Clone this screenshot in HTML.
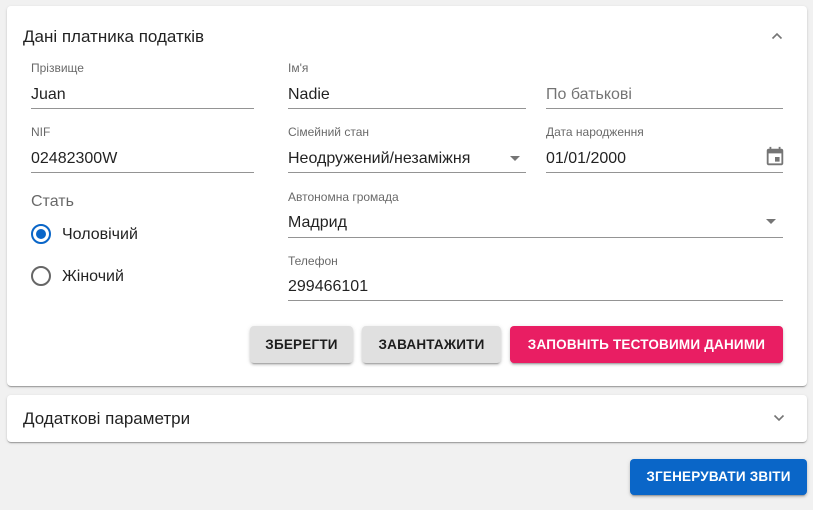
<!DOCTYPE html>
<html><head><meta charset="utf-8"><style>
*{margin:0;padding:0;box-sizing:border-box}
body{width:813px;height:510px;background:#f1f1f1;font-family:"Liberation Sans",Arial,sans-serif;position:relative;overflow:hidden;color:rgba(0,0,0,.87)}
.card{position:absolute;left:7px;width:800px;background:#fff;border-radius:4px;box-shadow:0 2px 1px -1px rgba(0,0,0,.2),0 1px 1px rgba(0,0,0,.14),0 1px 3px rgba(0,0,0,.12)}
.a{position:absolute;white-space:nowrap}
.lbl{font-size:12px;color:rgba(0,0,0,.6)}
.val{font-size:16px}
.ul{position:absolute;height:1px;background:rgba(0,0,0,.42)}
.btn{position:absolute;border-radius:4px;font-size:13.5px;font-weight:bold;text-align:center;line-height:37px;letter-spacing:.2px;box-shadow:0 3px 1px -2px rgba(0,0,0,.2),0 2px 2px rgba(0,0,0,.14),0 1px 5px rgba(0,0,0,.12)}
.tri{position:absolute;width:0;height:0;border-left:5px solid transparent;border-right:5px solid transparent;border-top:5px solid rgba(0,0,0,.54)}
</style></head><body>
<div class="card" style="top:6px;height:380px"></div>
<div class="card" style="top:395px;height:47px"></div>

<div class="a" style="left:23px;top:27px;font-size:17px">Дані платника податків</div>
<svg class="a" style="left:770px;top:31px" width="14" height="10"><path d="M2.5 7.5 L7 3 L11.5 7.5" stroke="rgba(0,0,0,.54)" stroke-width="1.6" fill="none"/></svg>

<div class="a lbl" style="left:31px;top:61px">Прізвище</div>
<div class="a val" style="left:31px;top:86px">Juan</div>
<div class="ul" style="left:31px;top:108px;width:223px"></div>
<div class="a lbl" style="left:288px;top:61px">Ім'я</div>
<div class="a val" style="left:288px;top:86px">Nadie</div>
<div class="ul" style="left:288px;top:108px;width:238px"></div>
<div class="a val" style="left:546px;top:86px;color:rgba(0,0,0,.55)">По батькові</div>
<div class="ul" style="left:546px;top:108px;width:237px"></div>

<div class="a lbl" style="left:31px;top:125px">NIF</div>
<div class="a val" style="left:31px;top:150px">02482300W</div>
<div class="ul" style="left:31px;top:172px;width:223px"></div>
<div class="a lbl" style="left:288px;top:125px">Сімейний стан</div>
<div class="a val" style="left:288px;top:150px">Неодружений/незаміжня</div>
<div class="tri" style="left:510px;top:156px"></div>
<div class="ul" style="left:288px;top:172px;width:238px"></div>
<div class="a lbl" style="left:546px;top:125px">Дата народження</div>
<div class="a val" style="left:546px;top:150px">01/01/2000</div>
<svg class="a" style="left:764px;top:146px" width="22" height="22" viewBox="0 0 24 24"><path fill="rgba(0,0,0,.54)" d="M17 12h-5v5h5v-5zM16 1v2H8V1H6v2H5c-1.1 0-2 .9-2 2v14c0 1.1.9 2 2 2h14c1.1 0 2-.9 2-2V5c0-1.1-.9-2-2-2h-1V1h-2zm3 18H5V8h14v11z"/></svg>
<div class="ul" style="left:546px;top:172px;width:237px"></div>

<div class="a" style="left:31px;top:193px;font-size:16px;color:rgba(0,0,0,.6)">Стать</div>
<div class="a" style="left:31px;top:224px;width:20px;height:20px;border:2px solid #0a66c8;border-radius:50%"><div style="position:absolute;left:3px;top:3px;width:10px;height:10px;border-radius:50%;background:#0a66c8"></div></div>
<div class="a val" style="left:62px;top:226px">Чоловічий</div>
<div class="a" style="left:31px;top:266px;width:20px;height:20px;border:2px solid rgba(0,0,0,.6);border-radius:50%"></div>
<div class="a val" style="left:62px;top:268px">Жіночий</div>

<div class="a lbl" style="left:288px;top:190px">Автономна громада</div>
<div class="a val" style="left:288px;top:214px">Мадрид</div>
<div class="tri" style="left:766px;top:219px"></div>
<div class="ul" style="left:288px;top:237px;width:495px"></div>
<div class="a lbl" style="left:288px;top:254px">Телефон</div>
<div class="a val" style="left:288px;top:278px">299466101</div>
<div class="ul" style="left:288px;top:300px;width:495px"></div>

<div class="btn" style="left:250px;top:326px;width:103px;background:#e0e0e0">ЗБЕРЕГТИ</div>
<div class="btn" style="left:362px;top:326px;width:139px;background:#e0e0e0">ЗАВАНТАЖИТИ</div>
<div class="btn" style="left:510px;top:326px;width:273px;background:#e91e63;color:#fff">ЗАПОВНІТЬ ТЕСТОВИМИ ДАНИМИ</div>

<div class="a" style="left:23px;top:409px;font-size:17px">Додаткові параметри</div>
<svg class="a" style="left:772px;top:413px" width="14" height="10"><path d="M2.5 2.5 L7 7 L11.5 2.5" stroke="rgba(0,0,0,.54)" stroke-width="1.6" fill="none"/></svg>

<div class="btn" style="left:630px;top:459px;width:177px;height:36px;line-height:36px;background:#0a66c8;color:#fff">ЗГЕНЕРУВАТИ ЗВІТИ</div>
</body></html>
